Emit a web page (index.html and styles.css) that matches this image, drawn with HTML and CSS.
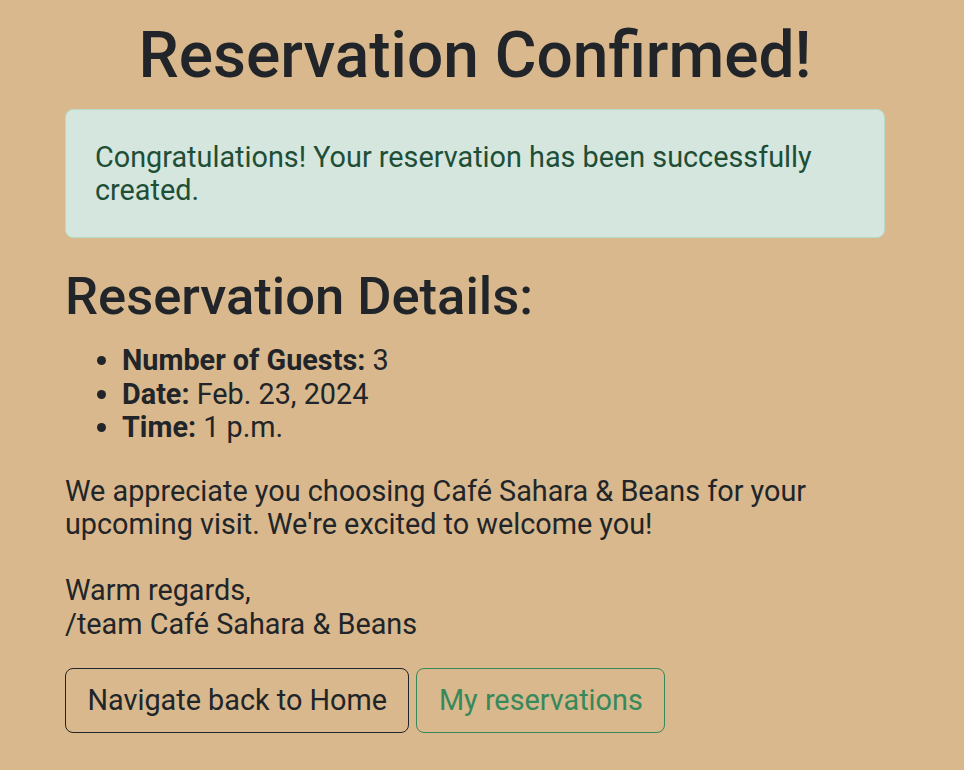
FILE: index.html
```html
<!DOCTYPE html>
<html lang="en">
<head>
<meta charset="utf-8">
<title>Reservation Confirmed</title>
<link rel="stylesheet" href="styles.css">
</head>
<body>
<main class="container">
  <h1 class="title">Reservation Confirmed!</h1>
  <div class="alert">Congratulations! Your reservation has been successfully created.</div>
  <h2 class="subtitle">Reservation Details:</h2>
  <ul class="details">
    <li><strong>Number of Guests:</strong> 3</li>
    <li><strong>Date:</strong> Feb. 23, 2024</li>
    <li><strong>Time:</strong> 1 p.m.</li>
  </ul>
  <p class="text">We appreciate you choosing Café Sahara &amp; Beans for your upcoming visit. We're excited to welcome you!</p>
  <p class="text signoff">Warm regards,<br>/team Café Sahara &amp; Beans</p>
  <div class="actions">
    <a class="btn btn-dark" href="#">Navigate back to Home</a>
    <a class="btn btn-green" href="#">My reservations</a>
  </div>
</main>
</body>
</html>
```
FILE: styles.css
```css
html, body {
  margin: 0;
  padding: 0;
  background: #d8b88c;
}
body {
  font-family: Roboto, "Liberation Sans", sans-serif;
  font-size: 28.8px;
  line-height: 33.3px;
  color: #212529;
}
.container {
  width: 820px;
  margin-left: 65px;
  padding-top: 18px;
  padding-bottom: 20px;
}
.title {
  margin: 0 0 14px;
  font-size: 64px;
  line-height: 1.2;
  font-weight: 500;
  text-align: center;
}
.alert {
  background: #d4e6de;
  border: 1px solid #b9d9c9;
  border-radius: 8px;
  color: #1f4e36;
  padding: 31.2px 29px 29.8px;
}
.subtitle {
  margin: 26.6px 0 16.5px;
  font-size: 52.5px;
  line-height: 1.2;
  font-weight: 500;
}
.details {
  margin: 0 0 30.5px;
  padding-left: 57px;
}
.details strong {
  font-weight: 700;
}
.text {
  margin: 0 0 33px;
}
.signoff {
  margin-bottom: 27px;
}
.actions {
  display: flex;
  gap: 7px;
}
.btn {
  display: block;
  padding: 14.85px 21.5px;
  border: 1px solid;
  border-radius: 8px;
  text-decoration: none;
}
.btn-dark {
  color: #212529;
  border-color: #212529;
}
.btn-green {
  color: #37885a;
  border-color: #37885a;
}
```
